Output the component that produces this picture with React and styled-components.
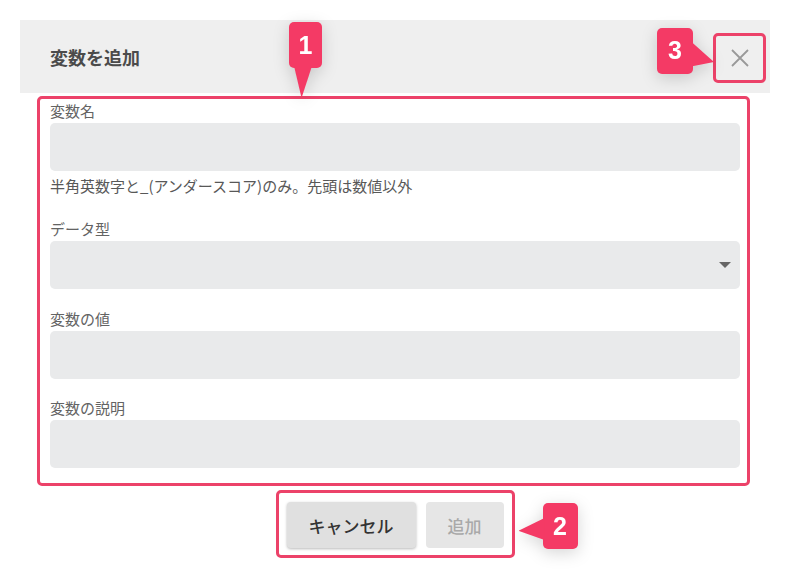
import React from 'react';
import styled, { createGlobalStyle, css } from 'styled-components';

const accent = '#ec4269';
const badgeRed = '#f43a65';

const GlobalStyle = createGlobalStyle`
  html, body {
    margin: 0;
    background: #fff;
  }
  body {
    font-family: 'Noto Sans CJK JP', 'Noto Sans', sans-serif;
  }
`;

const Page = styled.div`
  padding: 20px;
`;

const Dialog = styled.div`
  width: 750px;
  height: 535px;
  background: #fff;
`;

const Header = styled.div`
  height: 73px;
  background: #efefef;
  display: flex;
  align-items: center;
  justify-content: space-between;
  padding: 0 4px 0 30px;
  box-sizing: border-box;
`;

const Title = styled.h2`
  margin: 0;
  font-size: 18px;
  font-weight: 700;
  color: #4b4b4b;
`;

const Highlight = styled.div`
  position: relative;
  border: 3px solid ${accent};
  border-radius: 5px;
  box-sizing: border-box;
`;

const CloseBox = styled(Highlight)`
  width: 53px;
  height: 50px;
  display: flex;
  align-items: center;
  justify-content: center;
  margin-top: 2px;
`;

const FormBox = styled(Highlight)`
  margin: 3px 20px 0 17px;
  padding: 1px 7px 15px 10px;
`;

const Footer = styled.div`
  display: flex;
  justify-content: center;
  margin-top: 4px;
`;

const ButtonBox = styled(Highlight)`
  display: flex;
  gap: 10px;
  padding: 9px 8px 7px;
`;

const pointers = {
  down: css`
    top: calc(100% - 2px);
    left: 5px;
    width: 18px;
    height: 32px;
    clip-path: polygon(0 0, 100% 0, 42% 100%);
  `,
  right: css`
    left: calc(100% - 2px);
    top: 14px;
    width: 23px;
    height: 25px;
    clip-path: polygon(0 0, 100% 82%, 0 100%);
  `,
  left: css`
    right: calc(100% - 2px);
    top: 15px;
    width: 26px;
    height: 22px;
    clip-path: polygon(100% 0, 0 58%, 100% 100%);
  `,
};

const Badge = styled.div`
  position: absolute;
  z-index: 2;
  width: ${p => p.$w || 35}px;
  height: 46px;
  border-radius: 5px;
  background: ${badgeRed};
  color: #fff;
  display: flex;
  align-items: center;
  justify-content: center;
  font-family: 'Liberation Sans', Arial, sans-serif;
  font-weight: 700;
  font-size: 25px;
  filter: drop-shadow(0 4px 8px rgba(0, 0, 0, 0.16));
  &::after {
    content: '';
    position: absolute;
    background: ${badgeRed};
    ${p => pointers[p.$point]}
  }
`;

const Field = styled.div`
  display: flex;
  flex-direction: column;
  margin-top: ${p => p.$gap || 0}px;
`;

const Label = styled.label`
  font-size: 15px;
  line-height: 21px;
  color: #636363;
  margin: 0 0 2px;
`;

const Input = styled.input`
  height: 48px;
  border: none;
  border-radius: 5px;
  background: #e9eaeb;
  outline: none;
  padding: 0 12px;
  box-sizing: border-box;
  width: 100%;
`;

const Select = styled.div`
  height: 48px;
  border-radius: 5px;
  background: #e9eaeb;
  display: flex;
  align-items: center;
  justify-content: flex-end;
  padding-right: 9px;
`;

const Caret = styled.span`
  width: 0;
  height: 0;
  border-left: 6px solid transparent;
  border-right: 6px solid transparent;
  border-top: 6px solid #666;
`;

const Help = styled.div`
  font-size: 15px;
  line-height: 21px;
  color: #585858;
  margin-top: 4px;
`;

const Button = styled.button`
  height: 46px;
  padding: 0 22px;
  border: none;
  border-radius: 4px;
  font-family: inherit;
  font-size: 17px;
  font-weight: 500;
  background: ${p => (p.disabled ? '#e6e6e6' : '#e0e0e0')};
  color: ${p => (p.disabled ? '#a9a9a9' : '#333')};
  box-shadow: ${p => (p.disabled ? 'none' : '0 1px 3px rgba(0, 0, 0, 0.28)')};
`;

const CloseIcon = () => (
  <svg width="18" height="18" viewBox="0 0 18 18">
    <path d="M1 1L17 17M17 1L1 17" stroke="#999" strokeWidth="1.8" fill="none" />
  </svg>
);

export default function App() {
  return (
    <Page>
      <GlobalStyle />
      <Dialog>
        <Header>
          <Title>変数を追加</Title>
          <CloseBox>
            <Badge $point="right" $w={36} style={{ left: -59, top: -8 }}>3</Badge>
            <CloseIcon />
          </CloseBox>
        </Header>
        <FormBox>
          <Badge $point="down" $w={33} style={{ left: 249, top: -77 }}>1</Badge>
          <Field>
            <Label>変数名</Label>
            <Input />
            <Help>半角英数字と_(アンダースコア)のみ。先頭は数値以外</Help>
          </Field>
          <Field $gap={22}>
            <Label>データ型</Label>
            <Select>
              <Caret />
            </Select>
          </Field>
          <Field $gap={19}>
            <Label>変数の値</Label>
            <Input />
          </Field>
          <Field $gap={18}>
            <Label>変数の説明</Label>
            <Input />
          </Field>
        </FormBox>
        <Footer>
          <ButtonBox>
            <Button>キャンセル</Button>
            <Button disabled>追加</Button>
            <Badge $point="left" style={{ left: 'calc(100% + 31px)', top: 10 }}>2</Badge>
          </ButtonBox>
        </Footer>
      </Dialog>
    </Page>
  );
}
